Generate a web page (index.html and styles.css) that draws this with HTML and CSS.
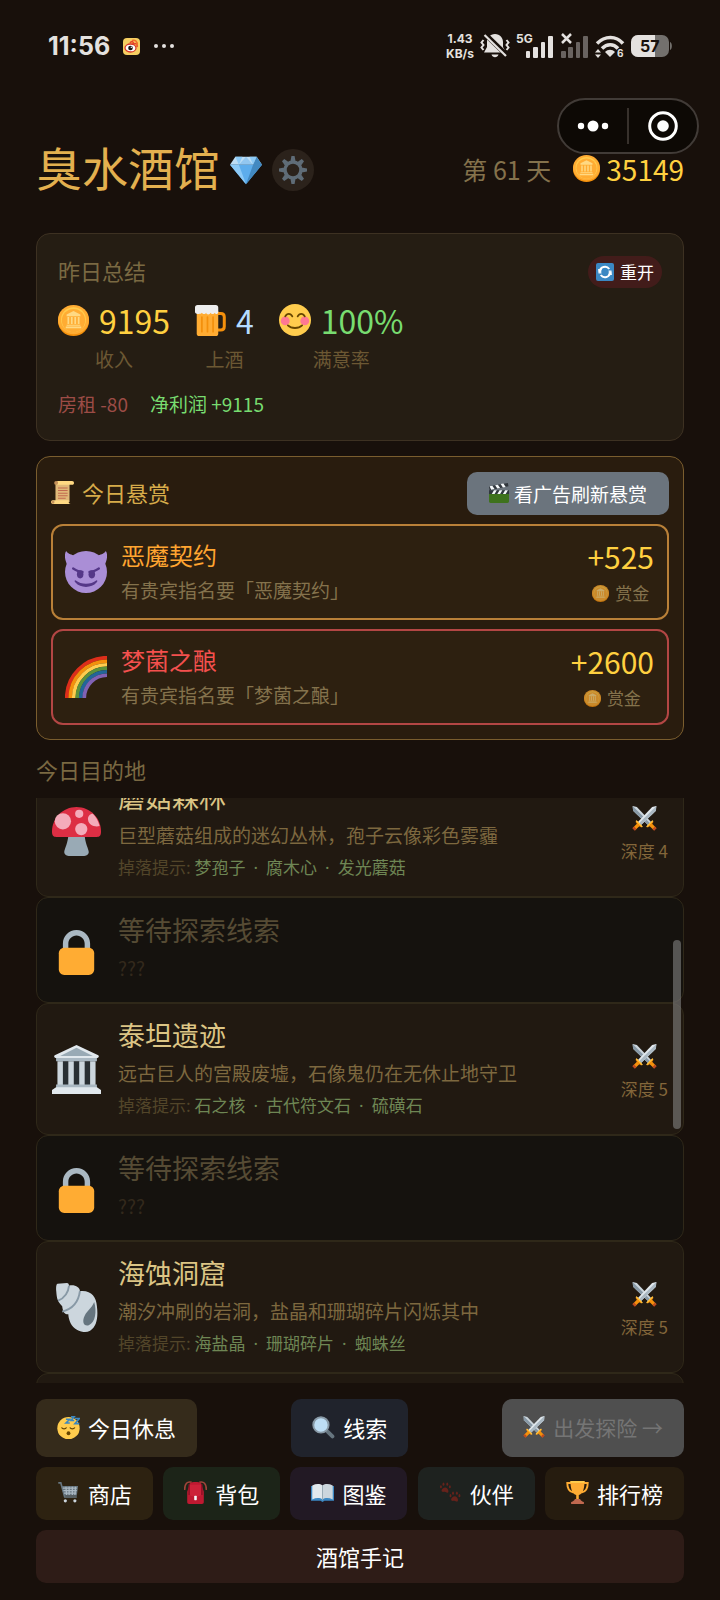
FILE: index.html
```html
<!DOCTYPE html>
<html lang="zh-CN">

<head>
    <meta charset="UTF-8">
    <meta name="viewport" content="width=device-width, initial-scale=1.0">
    <title>臭水酒馆</title>
    <link rel="stylesheet" href="styles.css">
</head>

<body>
    <!-- Shared icons -->
    <svg class="sprite" aria-hidden="true">
        <symbol id="coin" viewBox="0 0 36 36">
            <ellipse cx="18" cy="19" rx="18" ry="17" fill="#F4900C"/>
            <ellipse cx="18" cy="17" rx="18" ry="17" fill="#FFAC33"/>
            <circle cx="18" cy="17" r="14.5" fill="#FFCC4D"/>
            <circle cx="18" cy="18" r="13.5" fill="#FFAC33"/>
            <path fill="#FFD983" d="M18 7l-8 4v2h16v-2zM11 14h2v8h-2zM15 14h2v8h-2zM19 14h2v8h-2zM23 14h2v8h-2zM10 23h16v1H10zM9 25h18v2H9z"/>
        </symbol>
        <symbol id="swords" viewBox="0 0 36 36">
            <path fill="#CCD6DD" d="M1 0l6 1.500L27.500 23 23 27.500 1.500 7z"/>
            <path fill="#8899A6" d="M1 0L26 25l-3 2.500L1.500 7z"/>
            <path fill="#E1E8ED" d="M35 0l-6 1.500L8.500 23l4.500 4.500L34.500 7z"/>
            <path fill="#AAB8C2" d="M35 0L10 25l3 2.500L34.500 7z"/>
            <path fill="#F4900C" d="M7 21l8 8-1.500 2-3-2-6 6L1 31.500l6-6-2-3z"/>
            <path fill="#F4900C" d="M29 21l-8 8 1.500 2 3-2 6 6 3.500-3.500-6-6 2-3z"/>
            <path fill="#BE4A20" d="M3 29.500l3.500 3.500L4 35.500 .5 32zM33 29.500L29.500 33l2.500 2.500 3.500-3.500z"/>
            <path fill="#FFCC4D" d="M6.500 20.500l9 9-1 1-9-9zM29.500 20.500l-9 9 1 1 9-9z"/>
        </symbol>
        <symbol id="lock" viewBox="0 0 36 36">
            <path fill="#AAB8C2" d="M18 3C12.477 3 8 7.477 8 13v10h4V13c0-3.313 2.686-6 6-6s6 2.687 6 6v10h4V13c0-5.523-4.477-10-10-10z"/>
            <path fill="#FFAC33" d="M31 32c0 2.209-1.791 4-4 4H9c-2.209 0-4-1.791-4-4V20c0-2.209 1.791-4 4-4h18c2.209 0 4 1.791 4 4v12z"/>
        </symbol>
    </svg>

    <div class="status-bar">
        <div class="status-left">
            <span class="clock">11:56</span>
            <svg width="17" height="17" viewBox="0 0 17 17">
                <rect width="17" height="17" rx="4" fill="#f6cf62"/>
                <path d="M7 5c2-3 4-1 3 1 3-1 5 0 4 3" fill="#f0b43c" stroke="#e8432c" stroke-width="1.500"/>
                <path d="M9 2.500c3-1 6 1 5 5" fill="none" stroke="#f0702c" stroke-width="1.500"/>
                <ellipse cx="7.500" cy="10" rx="5.500" ry="4" fill="#fff" stroke="#d8382c" stroke-width="1.300"/>
                <circle cx="7.500" cy="10" r="2.300" fill="#1c1614"/>
                <circle cx="8.300" cy="9.300" r=".7" fill="#fff"/>
            </svg>
            <svg width="22" height="6" viewBox="0 0 22 6" fill="#e4e1df">
                <circle cx="3" cy="3" r="2"/><circle cx="11" cy="3" r="2"/><circle cx="19" cy="3" r="2"/>
            </svg>
        </div>
        <div class="status-right">
            <div class="net-speed">1.43<br>KB/s</div>
            <svg width="30" height="26" viewBox="0 0 30 26">
                <path d="M15 1c-5 0-8 4-8 8v5l-3 5.500h22L23 14V9c0-4-3-8-8-8zM11.500 21.500h7c-1 3.500-6 3.500-7 0z" fill="#e4e1df"/>
                <path d="M5 1l22 21.500" stroke="#18100b" stroke-width="5"/>
                <path d="M4.500 2L26 23" stroke="#e4e1df" stroke-width="2.200"/>
                <path d="M3.500 7L1.500 9.500l2 2.500-2 2.500 2 2.500M26.500 7l2 2.500-2 2.500 2 2.500-2 2.500" fill="none" stroke="#e4e1df" stroke-width="2"/>
            </svg>
            <svg class="signal" width="38" height="26" viewBox="0 0 38 26" fill="#e4e1df">
                <text x="0" y="10" class="signal-label">5G</text>
                <rect x="10" y="18" width="4" height="7" rx="1"/><rect x="17" y="14" width="5" height="11" rx="1"/>
                <rect x="25" y="9" width="4" height="16" rx="1"/><rect x="32" y="3" width="5" height="22" rx="1"/>
            </svg>
            <svg width="29" height="26" viewBox="0 0 29 26" fill="#696360">
                <rect x="1" y="18" width="5" height="7" rx="1"/><rect x="8" y="14" width="5" height="11" rx="1"/>
                <rect x="16" y="9" width="4" height="16" rx="1"/><rect x="23" y="3" width="5" height="22" rx="1"/>
                <path d="M2 1l9 9M11 1L2 10" stroke="#e4e1df" stroke-width="2.500"/>
            </svg>
            <svg width="30" height="26" viewBox="0 0 30 26">
                <path d="M2 10.500c8-8 19-8 26 0M7 15.500c5-5 11.500-5 16 0" fill="none" stroke="#e4e1df" stroke-width="3.500"/>
                <path d="M15 24l-5-5c3-3 7-3 10 0z" fill="#e4e1df"/>
                <path d="M0 19.500l3-3.500 3 3.500zM0 21.500L3 25l3-3.500z" fill="#e4e1df"/>
                <text x="22" y="24" class="wifi-label">6</text>
            </svg>
            <svg width="41" height="24" viewBox="0 0 41 24">
                <rect x="0" y="1" width="38" height="22" rx="7" fill="#73706d"/>
                <path d="M7 1h17v22H7a7 7 0 0 1-7-7V8a7 7 0 0 1 7-7z" fill="#e4e1df"/>
                <path d="M39 8c2.500 1 2.500 7 0 8z" fill="#73706d"/>
                <text x="9" y="18" class="battery-label">57</text>
            </svg>
        </div>
    </div>

    <div class="capsule">
        <button type="button" aria-label="更多">
            <svg width="32" height="12" viewBox="0 0 32 12" fill="#fff">
                <circle cx="4" cy="6" r="3.200"/><circle cx="16" cy="6" r="5.500"/><circle cx="28" cy="6" r="3.200"/>
            </svg>
        </button>
        <span class="capsule-line"></span>
        <button type="button" aria-label="关闭">
            <svg width="30" height="30" viewBox="0 0 30 30">
                <circle cx="15" cy="15" r="13.300" fill="none" stroke="#fff" stroke-width="3"/>
                <circle cx="15" cy="15" r="5.800" fill="#fff"/>
            </svg>
        </button>
    </div>

    <header class="header">
        <h1>臭水酒馆</h1>
        <svg width="32" height="32" viewBox="0 0 36 36">
            <path fill="#BDDDF4" d="M6 3h24l6 9H0z"/>
            <path fill="#5DADEC" d="M0 12h36L18 34z"/>
            <path fill="#8CCAF7" d="M0 12h10l8 22zM10 12L6 3h8zM30 3l-4 9-4-9z"/>
            <path fill="#4289C1" d="M36 12H26l-8 22zM30 3l6 9H26z"/>
            <path fill="#5DADEC" d="M10 12L18 3l8 9z" opacity=".45"/>
        </svg>
        <button type="button" class="settings" aria-label="设置">
            <svg width="28" height="28" viewBox="0 0 36 36">
                <g fill="#5f6c77">
                    <path d="M16 0h4l1 5v26l-1 5h-4l-1-5V5z"/>
                    <path d="M16 0h4l1 5v26l-1 5h-4l-1-5V5z" transform="rotate(45 18 18)"/>
                    <path d="M16 0h4l1 5v26l-1 5h-4l-1-5V5z" transform="rotate(90 18 18)"/>
                    <path d="M16 0h4l1 5v26l-1 5h-4l-1-5V5z" transform="rotate(135 18 18)"/>
                    <circle cx="18" cy="18" r="12.5"/>
                </g>
                <circle cx="18" cy="18" r="8" fill="#2b221b"/>
            </svg>
        </button>
        <div class="header-info">
            <span class="day">第 61 天</span>
            <span class="money"><svg width="27" height="27"><use href="#coin"/></svg>35149</span>
        </div>
    </header>

    <main>
        <section class="summary">
            <div class="summary-head">
                <h2>昨日总结</h2>
                <button type="button" class="restart">
                    <svg width="18" height="18" viewBox="0 0 36 36">
                        <rect width="36" height="36" rx="4" fill="#3B88C3"/>
                        <path d="M7.500 17.500a10.500 10.500 0 0 1 19-5.500M28.500 18.500a10.500 10.500 0 0 1-19 5.500" fill="none" stroke="#fff" stroke-width="4"/>
                        <path d="M4 12h8l1 9H5zM32 24h-8l-1-9h8z" fill="#fff" opacity=".9"/>
                        <circle cx="18" cy="18" r="7.500" fill="#3B88C3"/>
                    </svg>
                    重开
                </button>
            </div>
            <div class="stats">
                <div class="stat">
                    <div class="stat-value gold"><svg width="31" height="31"><use href="#coin"/></svg>9195</div>
                    <div class="stat-label">收入</div>
                </div>
                <div class="stat">
                    <div class="stat-value blue">
                        <svg width="31" height="31" viewBox="0 0 36 36">
                            <path d="M25 10h5c3 0 4 1 4 4v11c0 3-1 4-4 4h-5" fill="none" stroke="#F4900C" stroke-width="3.500"/>
                            <path fill="#FFAC33" d="M2 7h25v26c0 2-1 3-3 3H5c-2 0-3-1-3-3z"/>
                            <path d="M8 14v17M14.500 14v17M21 14v17" stroke="#F4900C" stroke-width="2" stroke-linecap="round"/>
                            <path fill="#EEE" d="M3 0h21c2 0 3 1 3 3v5c0 3-4 3-4 1-1 2-4 2-5 0-1 3-5 2-5 0-1 2-4 2-5 0-1 2-8 2-8-1V3c0-2 1-3 3-3z"/>
                        </svg>
                        4
                    </div>
                    <div class="stat-label">上酒</div>
                </div>
                <div class="stat">
                    <div class="stat-value green">
                        <svg width="32" height="32" viewBox="0 0 36 36">
                            <circle cx="18" cy="18" r="18" fill="#FFCC4D"/>
                            <circle cx="7" cy="19" r="5" fill="#FF7892"/><circle cx="29" cy="19" r="5" fill="#FF7892"/>
                            <path d="M7 14c2-4 6-4 8 0M21 14c2-4 6-4 8 0M10 24c4 4 12 4 16 0" fill="none" stroke="#664500" stroke-width="2" stroke-linecap="round"/>
                        </svg>
                        100%
                    </div>
                    <div class="stat-label">满意率</div>
                </div>
            </div>
            <div class="balance">
                <span class="rent">房租 -80</span>
                <span class="green">净利润 +9115</span>
            </div>
        </section>

        <section class="bounty">
            <div class="bounty-head">
                <h2>
                    <svg width="23" height="23" viewBox="0 0 36 36">
                        <path fill="#E0B878" d="M7 2h22v31H7z"/>
                        <path fill="#FFD983" d="M8 0h25c4 0 4 6 0 6H8c4-2 3-5 0-6zM3 30h25c-1 3 0 6 3 6H3c-4 0-4-6 0-6z"/>
                        <path d="M11 11h15M11 15h15M11 19h15M11 23h15M11 27h12" stroke="#C1694F" stroke-width="1.600"/>
                        <circle cx="8" cy="3" r="3" fill="#C6935C"/><circle cx="3" cy="33" r="2.500" fill="#C6935C"/>
                    </svg>
                    今日悬赏
                </h2>
                <button type="button" class="refresh">
                    <svg width="20" height="20" viewBox="0 0 36 36">
                        <path fill="#3E721D" d="M0 19h36v14c0 2-1 3-3 3H3c-2 0-3-1-3-3z"/>
                        <path fill="#31373D" d="M0 13h36v7H0zM0 6L34 0l1 6L1 13z"/>
                        <path fill="#F5F8FA" d="M5 20l4-7h5l-4 7zM15 20l4-7h5l-4 7zM25 20l4-7h5l-4 7zM4 12L1 6l5-1 4 6zM15 10l-4-6 5-1 4 6zM25 8l-4-6 5-1 4 6z"/>
                    </svg>
                    看广告刷新悬赏
                </button>
            </div>

            <div class="order order-gold">
                <svg width="42" height="42" viewBox="0 0 36 36">
                    <path fill="#AA8ED6" d="M1 0c2 3 5 3 7 4L2 12C0 8-1 3 1 0zM35 0c-2 3-5 3-7 4l6 8c2-4 3-9 1-12z"/>
                    <circle cx="18" cy="18" r="18" fill="#AA8ED6"/>
                    <path d="M7 15c3 2 5 3 8 3M29 15c-3 2-5 3-8 3" fill="none" stroke="#553788" stroke-width="2" stroke-linecap="round"/>
                    <ellipse cx="13" cy="20" rx="2.800" ry="3.500" fill="#553788"/><ellipse cx="23" cy="20" rx="2.800" ry="3.500" fill="#553788"/>
                    <path fill="#553788" d="M9 25c5 4 13 4 18 0 1 0 1 1 0 2-4 5-14 5-18 0-1-1-1-2 0-2z"/>
                </svg>
                <div class="order-text">
                    <h3>恶魔契约</h3>
                    <p>有贵宾指名要「恶魔契约」</p>
                </div>
                <div class="reward">
                    <strong>+525</strong>
                    <span><svg width="17" height="17"><use href="#coin"/></svg>赏金</span>
                </div>
            </div>

            <div class="order order-red">
                <svg width="42" height="42" viewBox="0 0 36 36" fill="none" stroke-width="3.200">
                    <path d="M1.500 36A34.500 34.500 0 0 1 36 1.500" stroke="#DD2E1A"/>
                    <path d="M4.500 36A31.500 31.500 0 0 1 36 4.500" stroke="#F4900C"/>
                    <path d="M7.500 36A28.500 28.500 0 0 1 36 7.500" stroke="#FFCC4D"/>
                    <path d="M10.500 36A25.500 25.500 0 0 1 36 10.500" stroke="#5C913B"/>
                    <path d="M13.500 36A22.500 22.500 0 0 1 36 13.500" stroke="#226699"/>
                    <path d="M16.500 36A19.500 19.500 0 0 1 36 16.500" stroke="#8062B5"/>
                </svg>
                <div class="order-text">
                    <h3>梦菌之酿</h3>
                    <p>有贵宾指名要「梦菌之酿」</p>
                </div>
                <div class="reward">
                    <strong>+2600</strong>
                    <span><svg width="17" height="17"><use href="#coin"/></svg>赏金</span>
                </div>
            </div>
        </section>

        <h2 class="places-title">今日目的地</h2>
        <div class="places-wrap">
            <ul class="places" id="places">
                <li class="place">
                    <svg width="49" height="49" viewBox="0 0 36 36">
                        <path fill="#99AAB5" d="M12 20h12c0 6 3 11 3 13 0 2-2 3-4 3H13c-2 0-4-1-4-3s3-7 3-13z"/>
                        <path fill="#DD2E44" d="M36 18C36 8 28 0 18 0S0 8 0 18c0 3 1 4 3 4h30c2 0 3-1 3-4z"/>
                        <g fill="#F4ABBA">
                            <circle cx="8" cy="10.500" r="6"/><circle cx="20" cy="5" r="3"/><circle cx="21.500" cy="16.200" r="4.500"/>
                            <path d="M30 5c2 2 4 5 5 9-4 1-8-1-8.500-4.500C26 7 28 5 30 5z"/>
                        </g>
                    </svg>
                    <div class="place-text">
                        <h3>蘑菇森林</h3>
                        <p>巨型蘑菇组成的迷幻丛林，孢子云像彩色雾霾</p>
                        <p class="drops">掉落提示: <span>梦孢子<i>·</i>腐木心<i>·</i>发光蘑菇</span></p>
                    </div>
                    <div class="depth"><svg width="25" height="25"><use href="#swords"/></svg>深度 4</div>
                </li>
                <li class="place locked">
                    <svg width="49" height="49"><use href="#lock"/></svg>
                    <div class="place-text">
                        <h3>等待探索线索</h3>
                        <p>???</p>
                    </div>
                </li>
                <li class="place">
                    <svg width="49" height="49" viewBox="0 0 36 36">
                        <path fill="#292F33" d="M5 12h26v19H5z"/>
                        <path fill="#CCD6DD" d="M4 12h4v18H4zM12 12h4v18h-4zM20 12h4v18h-4zM28 12h4v18h-4z"/>
                        <path fill="#AAB8C2" d="M3 9h30v3H3zM3 29h30v3H3z"/>
                        <path fill="#E1E8ED" d="M18 0l16 7.500c1 1 0 2-1 2H3c-1 0-2-1-1-2zM0 33l3-2h30l3 2v3H0z"/>
                        <path fill="#99AAB5" d="M18 2l12 6H6z"/>
                    </svg>
                    <div class="place-text">
                        <h3>泰坦遗迹</h3>
                        <p>远古巨人的宫殿废墟，石像鬼仍在无休止地守卫</p>
                        <p class="drops">掉落提示: <span>石之核<i>·</i>古代符文石<i>·</i>硫磺石</span></p>
                    </div>
                    <div class="depth"><svg width="25" height="25"><use href="#swords"/></svg>深度 5</div>
                </li>
                <li class="place locked">
                    <svg width="49" height="49"><use href="#lock"/></svg>
                    <div class="place-text">
                        <h3>等待探索线索</h3>
                        <p>???</p>
                    </div>
                </li>
                <li class="place">
                    <svg width="49" height="49" viewBox="0 0 36 36">
                        <path fill="#CCD6DD" d="M4 .5l7-.5c1 0 1.500 1 1.500 2 4-1 8 1 8 4 8-1 12 4 12.500 11 1 8 0 15-5 18-6 3-13-1-15-7-.7-2-1-4-1-5-3 0-4-2-4.500-6C3 13 3.500 9 3 5c0-2 0-4 1-4.500z"/>
                        <path d="M12.500 2C12 7 9 11 4.500 13M20.500 6c-1 8-5 13-13 15" fill="none" stroke="#8899A6" stroke-width="1.400"/>
                        <path fill="#66757F" d="M31 14c2 7 1 15-4 17-4 1-5-3-3-7s5-5 7-10z"/>
                    </svg>
                    <div class="place-text">
                        <h3>海蚀洞窟</h3>
                        <p>潮汐冲刷的岩洞，盐晶和珊瑚碎片闪烁其中</p>
                        <p class="drops">掉落提示: <span>海盐晶<i>·</i>珊瑚碎片<i>·</i>蜘蛛丝</span></p>
                    </div>
                    <div class="depth"><svg width="25" height="25"><use href="#swords"/></svg>深度 5</div>
                </li>
                <li class="place"></li>
            </ul>
            <div class="scroll-thumb"></div>
        </div>
    </main>

    <footer class="actions">
        <div class="action-row">
            <button type="button" class="btn big rest">
                <svg width="23" height="23" viewBox="0 0 36 36">
                    <circle cx="18" cy="19" r="17.500" fill="#FFCC4D"/>
                    <path d="M7 18c2 3 6 3 8 0M20 18c2 3 6 3 8 0" fill="none" stroke="#664500" stroke-width="2"/>
                    <circle cx="18" cy="27" r="3" fill="#664500"/>
                    <path d="M14 5h6l-6 6h6M22 1h5l-5 6h5M28 4h7l-7 8h7" fill="none" stroke="#3B88C3" stroke-width="2.500"/>
                </svg>
                今日休息
            </button>
            <button type="button" class="btn big clue">
                <svg width="23" height="23" viewBox="0 0 36 36">
                    <path d="M22 22l10 10" stroke="#66757F" stroke-width="6" stroke-linecap="round"/>
                    <circle cx="14" cy="14" r="12" fill="#BDDDF4" stroke="#8899A6" stroke-width="3"/>
                </svg>
                线索
            </button>
            <button type="button" class="btn big depart" disabled>
                <svg width="22" height="22"><use href="#swords"/></svg>
                出发探险 →
            </button>
        </div>
        <div class="action-row">
            <button type="button" class="btn shop">
                <svg width="23" height="23" viewBox="0 0 36 36">
                    <path d="M2 3h4l6 22h19" fill="none" stroke="#66757F" stroke-width="2.500"/>
                    <path fill="#66757F" d="M7 8h26l-2 15H11z"/>
                    <path d="M9 11h22M10 15h21M11 19h19M14 9l1 13M19 9v13M24 9v13M29 9l-1 13" stroke="#AAB8C2" stroke-width="2"/>
                    <circle cx="13" cy="31" r="2.500" fill="#CCD6DD"/><circle cx="28" cy="31" r="2.500" fill="#CCD6DD"/>
                </svg>
                商店
            </button>
            <button type="button" class="btn bag">
                <svg width="23" height="23" viewBox="0 0 36 36">
                    <path d="M12 2C5 0 1 4 1 14M24 2c7-2 11 2 11 12" fill="none" stroke="#A0443A" stroke-width="2.500"/>
                    <path fill="#BE1931" d="M9 4c4-3 14-3 18 0l4 13v16c0 2-1 3-3 3H8c-2 0-3-1-3-3V17z"/>
                    <path fill="#DD2E44" d="M9 6h18v15c0 4-18 4-18 0z" opacity=".45"/>
                    <path d="M8 5v17M28 5v17" stroke="#8A0F24" stroke-width="2"/>
                    <rect x="16" y="23" width="4" height="7" rx="1" fill="#F5F8FA"/>
                </svg>
                背包
            </button>
            <button type="button" class="btn atlas">
                <svg width="23" height="23" viewBox="0 0 36 36">
                    <path fill="#3B88C3" d="M0 8h36v23H21l-3 2-3-2H0z"/>
                    <path fill="#E1E8ED" d="M2 7c6-3 12-3 16 0v22c-4-3-10-3-16 0z"/>
                    <path fill="#CCD6DD" d="M34 7c-6-3-12-3-16 0v22c4-3 10-3 16 0z"/>
                    <path d="M18 7v23" stroke="#99AAB5" stroke-width="1.500"/>
                </svg>
                图鉴
            </button>
            <button type="button" class="btn partner">
                <svg width="23" height="23" viewBox="0 0 36 36" fill="#66221B">
                    <path d="M10 10c4 0 6 7 4 8s-3-1-5-1-5 1-5-2 3-5 6-5zM25 24c4 0 6 7 4 8s-3-1-5-1-5 1-5-2 3-5 6-5z"/>
                    <ellipse cx="3" cy="9" rx="1.500" ry="2.500"/><ellipse cx="7" cy="5" rx="1.500" ry="2.500"/><ellipse cx="13" cy="5" rx="1.500" ry="2.500"/><ellipse cx="17" cy="9" rx="1.500" ry="2.500"/>
                    <ellipse cx="18" cy="23" rx="1.500" ry="2.500"/><ellipse cx="22" cy="19" rx="1.500" ry="2.500"/><ellipse cx="28" cy="19" rx="1.500" ry="2.500"/><ellipse cx="32" cy="23" rx="1.500" ry="2.500"/>
                </svg>
                伙伴
            </button>
            <button type="button" class="btn rank">
                <svg width="23" height="23" viewBox="0 0 36 36">
                    <path d="M9 3H2c0 10 3 14 10 15M27 3h7c0 10-3 14-10 15" fill="none" stroke="#FFAC33" stroke-width="3"/>
                    <path fill="#FFAC33" d="M7 0h22c0 13-3 20-9 22v7h-4v-7C10 20 7 13 7 0z"/>
                    <path fill="#FFCC4D" d="M7 0h22v3H7z"/>
                    <path fill="#C1694F" d="M14 28h8c1 3 4 4 6 5v3H8v-3c2-1 5-2 6-5z"/>
                </svg>
                排行榜
            </button>
        </div>
        <button type="button" class="btn journal">酒馆手记</button>
    </footer>

    <script>
        document.getElementById('places').scrollTop = 33;
    </script>
</body>

</html>
```
FILE: styles.css
```css
/* Base */
* {
    margin: 0;
    padding: 0;
    box-sizing: border-box;
}

body {
    font-family: "Noto Sans CJK SC", sans-serif;
    font-weight: 400;
    background: #18100b;
    color: #84724c;
    height: 100vh;
    display: flex;
    flex-direction: column;
}

h1, h2, h3 {
    font-weight: inherit;
}

h2 {
    padding-bottom: 3px;
    font-size: 22px;
    line-height: 31px;
}

button {
    font: inherit;
    border: none;
    color: #fff;
    display: flex;
    align-items: center;
    justify-content: center;
    cursor: pointer;
}

svg {
    display: block;
    flex: none;
}

.sprite {
    position: absolute;
    width: 0;
    height: 0;
}

.gold {
    color: #ffd040;
}

.blue {
    color: #b5dcff;
}

.green {
    color: #78dc70;
}

/* Status bar */
.status-bar {
    height: 92px;
    flex: none;
    padding: 0 48px;
    display: flex;
    align-items: center;
    justify-content: space-between;
    color: #e4e1df;
}

.status-left {
    display: flex;
    align-items: center;
    gap: 13px;
}

.clock {
    font-family: Inter, sans-serif;
    font-size: 25px;
    font-weight: 700;
}

.status-right {
    display: flex;
    align-items: center;
    gap: 6px;
}

.net-speed {
    font-family: Inter, sans-serif;
    font-size: 12px;
    line-height: 15px;
    font-weight: 700;
    text-align: center;
}

.signal {
    overflow: visible;
}

.signal-label {
    font: 700 12px Inter, sans-serif;
}

.wifi-label {
    font: 700 10px Inter, sans-serif;
    fill: #e4e1df;
}

.battery-label {
    font: 700 16px Inter, sans-serif;
    fill: #18100b;
}

/* Floating mini program menu */
.capsule {
    position: absolute;
    top: 98px;
    right: 21px;
    width: 142px;
    height: 56px;
    display: flex;
    align-items: center;
    background: #0d0905;
    border: 2px solid #413b37;
    border-radius: 28px;
}

.capsule button {
    flex: 1;
    height: 100%;
    background: none;
}

.capsule-line {
    width: 2px;
    height: 36px;
    background: #37312c;
}

/* Header */
.header {
    flex: none;
    padding: 0 36px;
    margin: 47px 0 33px;
    display: flex;
    align-items: center;
    gap: 10px;
}

.header h1 {
    font-size: 46px;
    line-height: 55px;
    padding-bottom: 6px;
    color: #e3b04f;
}

.settings {
    width: 42px;
    height: 42px;
    border-radius: 50%;
    background: #2b221b;
}

.header-info {
    margin-left: auto;
    padding-bottom: 2px;
    display: flex;
    align-items: center;
    gap: 22px;
}

.day {
    font-size: 25px;
    line-height: 40px;
}

.money {
    display: flex;
    align-items: center;
    gap: 6px;
    font-size: 28px;
    line-height: 40px;
    color: #ffd040;
}

main {
    flex: 1;
    min-height: 0;
    padding: 0 36px;
    display: flex;
    flex-direction: column;
}

/* Yesterday summary */
.summary {
    flex: none;
    padding: 21px 21px 23px;
    margin-bottom: 15px;
    background: #251d13;
    border: 1px solid #3d3122;
    border-radius: 14px;
}

.summary-head {
    display: flex;
    align-items: center;
    justify-content: space-between;
}

.summary-head h2 {
    color: #7a6942;
}

.restart {
    height: 32px;
    padding: 0 8px 1px;
    gap: 6px;
    font-size: 17px;
    background: #421c1a;
    border-radius: 16px;
}

.stats {
    display: flex;
    gap: 25px;
    margin-top: 11px;
}

.stat-value {
    display: flex;
    align-items: center;
    gap: 10px;
    font-size: 32px;
    line-height: 40px;
}

.stat-label {
    margin-top: 7px;
    font-size: 19px;
    line-height: 24px;
    text-align: center;
    color: #6c5833;
}

.balance {
    display: flex;
    gap: 22px;
    margin-top: 21px;
    padding-bottom: 1px;
    font-size: 19px;
    line-height: 24px;
}

.rent {
    color: #9c4c46;
}

/* Bounties */
.bounty {
    flex: none;
    display: flex;
    flex-direction: column;
    gap: 9px;
    padding: 15px 14px 14px;
    background: #291c0e;
    border: 1px solid #7a5d2e;
    border-radius: 14px;
}

.bounty-head {
    display: flex;
    align-items: center;
    justify-content: space-between;
}

.bounty-head h2 {
    display: flex;
    align-items: center;
    gap: 8px;
    color: #d6ab4a;
}

.refresh {
    height: 43px;
    padding: 0 22px 1px;
    gap: 5px;
    font-size: 19px;
    background: #6b747d;
    border-radius: 10px;
}

.order {
    height: 96px;
    padding: 0 13px 1px 12px;
    display: flex;
    align-items: center;
    gap: 14px;
    background: #2d2010;
    border: 2px solid;
    border-radius: 12px;
}

.order-gold {
    border-color: #b98038;
}

.order-gold h3 {
    color: #ffa530;
}

.order-red {
    border-color: #b34644;
}

.order-red h3 {
    color: #f4504e;
}

.order-text {
    flex: 1;
}

.order h3 {
    font-size: 24px;
    line-height: 32px;
}

.order p {
    margin-top: 5px;
    font-size: 19px;
    line-height: 28px;
}

.reward {
    display: flex;
    flex-direction: column;
    align-items: center;
    gap: 7px;
}

.reward strong {
    font-size: 30px;
    line-height: 36px;
    font-weight: 400;
    color: #ffd040;
}

.reward span {
    display: flex;
    align-items: center;
    gap: 6px;
    font-size: 17px;
    line-height: 24px;
}

.reward svg {
    opacity: 0.75;
}

/* Destinations */
.places-title {
    flex: none;
    margin: 14px 0 10px;
    color: #7a6942;
}

.places-wrap {
    position: relative;
    flex: 1;
    min-height: 0;
}

.places {
    height: 100%;
    list-style: none;
    overflow-y: auto;
    scrollbar-width: none;
}

.place {
    min-height: 132px;
    padding: 12px 15px;
    display: flex;
    align-items: center;
    gap: 17px;
    background: #211911;
    border: 1px solid #2f2819;
    border-radius: 12px;
}

.place-text {
    flex: 1;
    padding-bottom: 3px;
}

.place h3 {
    font-size: 27px;
    line-height: 36px;
    color: #dcc585;
}

.place p {
    margin-top: 6px;
    font-size: 19px;
    line-height: 28px;
    color: #7d683f;
}

.place .drops {
    font-size: 17px;
    line-height: 24px;
    color: #524529;
}

.drops span {
    color: #6e8654;
}

/* narrow middle dot between drops */
.drops i {
    margin: 0 8px;
    font-family: "Noto Sans", sans-serif;
    font-style: normal;
}

.depth {
    padding-top: 6px;
    display: flex;
    flex-direction: column;
    align-items: center;
    gap: 8px;
    font-size: 17px;
    line-height: 24px;
    color: #83663a;
}

.locked {
    min-height: 106px;
    background: #15120e;
}

.locked .place-text {
    padding-bottom: 6px;
}

.place.locked h3 {
    color: #564b34;
}

.place.locked p {
    color: #33291c;
}

.scroll-thumb {
    position: absolute;
    top: 142px;
    right: 3px;
    width: 8px;
    height: 189px;
    border-radius: 4px;
    background: rgba(130, 130, 130, 0.6);
}

/* Bottom buttons */
.actions {
    flex: none;
    padding: 16px 36px 17px;
    display: flex;
    flex-direction: column;
    gap: 10px;
}

.action-row {
    display: flex;
    justify-content: space-between;
}

.btn {
    height: 53px;
    padding: 0 21px 2px;
    gap: 8px;
    font-size: 22px;
    border-radius: 10px;
}

.big {
    height: 58px;
}

.rest {
    background: #352b1b;
}

.clue {
    background: #20232c;
}

.depart {
    font-size: 21px;
    color: #757575;
    background: #4f4f4f;
    cursor: default;
}

.shop {
    background: #2d2211;
}

.bag {
    background: #1c2418;
}

.atlas {
    background: #221924;
}

.partner {
    background: #1e221f;
}

.rank {
    background: #261c0f;
}

.journal {
    background: #2e1c17;
}
```
